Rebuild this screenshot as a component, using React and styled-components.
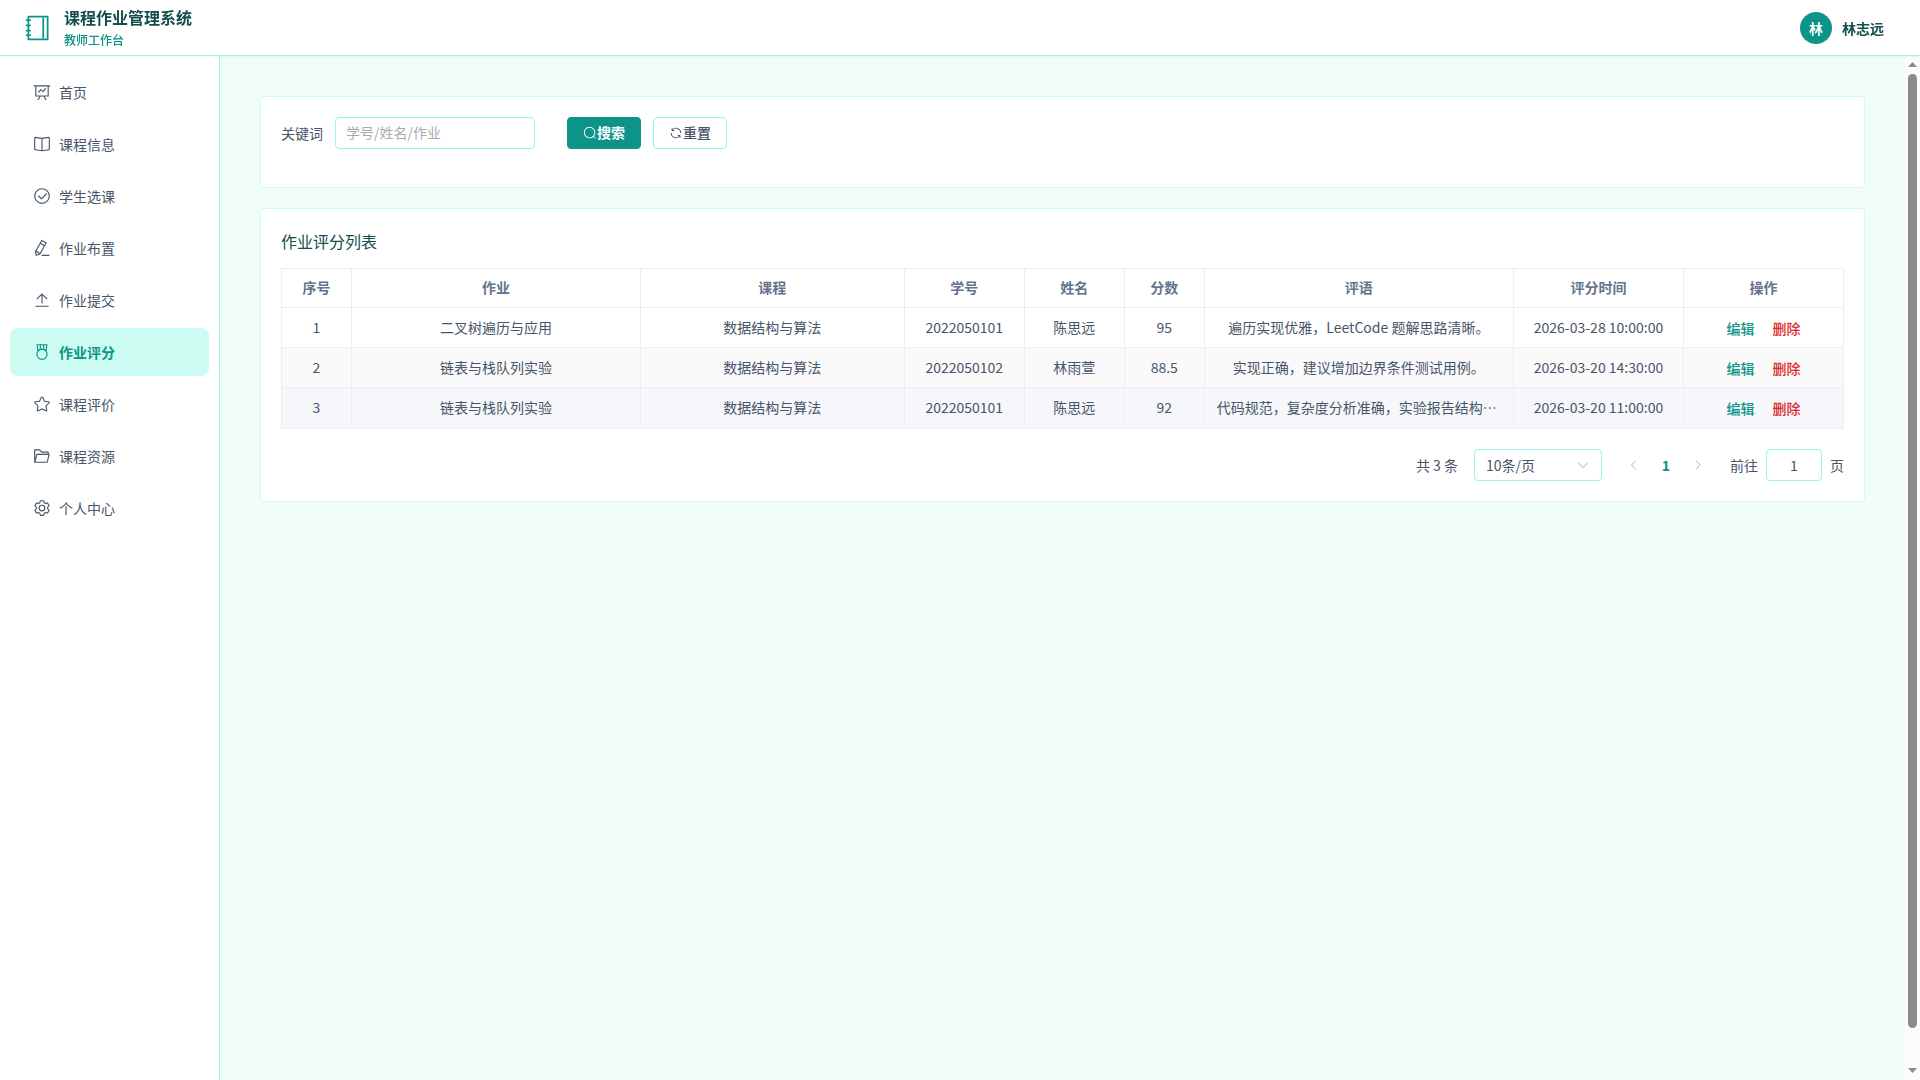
import { useState } from "react";
import styled, { createGlobalStyle, css } from "styled-components";

const ICONS = {
  notebook: [
    "M192 128v768h640V128zm-32-64h704a32 32 0 0 1 32 32v832a32 32 0 0 1-32 32H160a32 32 0 0 1-32-32V96a32 32 0 0 1 32-32",
    "M672 128h64v768h-64zM96 192h128q32 0 32 32t-32 32H96q-32 0-32-32t32-32m0 192h128q32 0 32 32t-32 32H96q-32 0-32-32t32-32m0 192h128q32 0 32 32t-32 32H96q-32 0-32-32t32-32m0 160h128q32 0 32 32t-32 32H96q-32 0-32-32t32-32",
  ],
  dataLine: [
    "M359.168 768H160a32 32 0 0 1-32-32V192H64a32 32 0 0 1 0-64h896a32 32 0 1 1 0 64h-64v544a32 32 0 0 1-32 32H665.216l110.848 192h-73.856L591.36 768H433.024L322.176 960H248.32zM832 192H192v512h640zM342.656 534.656a32 32 0 1 1-45.312-45.312L444.992 341.76l125.44 94.08L679.04 300.032a32 32 0 1 1 49.92 39.936L581.632 524.224 451.008 426.24 342.656 534.592z",
  ],
  reading: [
    "m512 863.36 384-54.848v-638.72L525.568 222.72a96 96 0 0 1-27.136 0L128 169.792v638.72zM137.024 106.432l370.432 52.928a32 32 0 0 0 9.088 0l370.432-52.928A64 64 0 0 1 960 169.792v638.72a64 64 0 0 1-54.976 63.36l-388.48 55.488a32 32 0 0 1-9.088 0l-388.48-55.488A64 64 0 0 1 64 808.512v-638.72a64 64 0 0 1 73.024-63.36",
    "M480 192h64v704h-64z",
  ],
  circleCheck: [
    "M512 896a384 384 0 1 0 0-768 384 384 0 0 0 0 768m0 64a448 448 0 1 1 0-896 448 448 0 0 1 0 896",
    "M745.344 361.344a32 32 0 0 1 45.312 45.312l-288 288a32 32 0 0 1-45.312 0l-160-160a32 32 0 1 1 45.312-45.312L480 626.752z",
  ],
  editPen: [
    "m199.04 672.64 193.984 112 224-387.968-193.92-112-224 388.032zm-23.872 60.16 32.896 148.288 144.896-45.696zM455.04 229.248l193.92 112 56.704-98.112-193.984-112zM104.32 708.8l384-665.024 304.768 175.936L409.152 884.8h.064l-248.448 78.336zm384 254.272v-64h448v64z",
  ],
  upload: [
    "M160 832h704a32 32 0 1 1 0 64H160a32 32 0 1 1 0-64m384-578.304V704h-64V247.296L237.248 490.048 192 444.8 508.8 128l316.8 316.8-45.312 45.248z",
  ],
  medal: [
    "M512 896a256 256 0 1 0 0-512 256 256 0 0 0 0 512m0 64a320 320 0 1 1 0-640 320 320 0 0 1 0 640",
    "M576 128H448v200a286.7 286.7 0 0 1 64-8c19.52 0 40.832 2.688 64 8zm64 0v219.648c24.448 9.088 50.56 20.416 78.4 33.92L757.44 128zm-256 0H266.624l39.04 253.568c27.84-13.504 53.888-24.832 78.336-33.92zM229.312 64h565.376a32 32 0 0 1 31.616 36.864L768 480c-113.792-64-199.104-96-256-96s-142.208 32-256 96l-58.304-379.136A32 32 0 0 1 229.312 64",
  ],
  star: [
    "m512 747.84 228.16 119.936a6.4 6.4 0 0 0 9.28-6.72l-43.52-254.08 184.512-179.904a6.4 6.4 0 0 0-3.52-10.88l-255.104-37.12L517.76 147.904a6.4 6.4 0 0 0-11.52 0L392.192 379.072l-255.104 37.12a6.4 6.4 0 0 0-3.52 10.88L318.08 606.976l-43.584 254.08a6.4 6.4 0 0 0 9.28 6.72zM313.6 924.48a70.4 70.4 0 0 1-102.144-74.24l37.888-220.928L88.96 472.96A70.4 70.4 0 0 1 128 352.896l221.76-32.256 99.2-200.96a70.4 70.4 0 0 1 126.208 0l99.2 200.96 221.824 32.256a70.4 70.4 0 0 1 39.04 120.064L774.72 629.376l37.888 220.928a70.4 70.4 0 0 1-102.144 74.24L512 820.096l-198.4 104.32z",
  ],
  folderOpened: [
    "M878.08 448H241.92l-96 384h636.16zM832 384v-64H485.76L357.504 192H128v448l57.92-231.744A32 32 0 0 1 216.96 384zm-24.96 512H96a32 32 0 0 1-32-32V160a32 32 0 0 1 32-32h287.872l128.384 128H864a32 32 0 0 1 32 32v96h23.04a32 32 0 0 1 31.04 39.744l-112 448A32 32 0 0 1 807.04 896",
  ],
  setting: [
    "M600.704 64a32 32 0 0 1 30.464 22.208l35.2 109.376c14.784 7.232 28.928 15.36 42.432 24.512l112.384-24.192a32 32 0 0 1 34.432 15.36L944.32 364.8a32 32 0 0 1-4.032 37.504l-77.12 85.12a357.12 357.12 0 0 1 0 49.024l77.12 85.248a32 32 0 0 1 4.032 37.504l-88.704 153.6a32 32 0 0 1-34.432 15.296L708.8 803.904c-13.44 9.088-27.648 17.28-42.368 24.512l-35.264 109.376A32 32 0 0 1 600.704 960H423.296a32 32 0 0 1-30.464-22.208L357.696 828.48a351.616 351.616 0 0 1-42.56-24.64l-112.32 24.256a32 32 0 0 1-34.432-15.36L79.68 659.2a32 32 0 0 1 4.032-37.504l77.12-85.248a357.12 357.12 0 0 1 0-48.896l-77.12-85.248A32 32 0 0 1 79.68 364.8l88.704-153.6a32 32 0 0 1 34.432-15.296l112.32 24.256c13.568-9.152 27.776-17.408 42.56-24.64l35.2-109.312A32 32 0 0 1 423.232 64H600.64zm-23.424 64H446.72l-36.352 113.088-24.512 11.968a294.113 294.113 0 0 0-34.816 20.096l-22.656 15.36-116.224-25.088-65.28 113.152 79.68 88.192-1.92 27.136a293.12 293.12 0 0 0 0 40.192l1.92 27.136-79.808 88.192 65.344 113.152 116.224-25.024 22.656 15.296a294.113 294.113 0 0 0 34.816 20.096l24.512 11.968L446.72 896h130.688l36.48-113.152 24.448-11.904a288.282 288.282 0 0 0 34.752-20.096l22.592-15.296 116.288 25.024 65.28-113.152-79.744-88.192 1.92-27.136a293.12 293.12 0 0 0 0-40.256l-1.92-27.136 79.808-88.128-65.344-113.152-116.288 24.96-22.592-15.232a287.616 287.616 0 0 0-34.752-20.096l-24.448-11.904L577.344 128zM512 320a192 192 0 1 1 0 384 192 192 0 0 1 0-384m0 64a128 128 0 1 0 0 256 128 128 0 0 0 0-256",
  ],
  search: [
    "m795.904 750.72 124.992 124.928a32 32 0 0 1-45.248 45.248L750.656 795.904a416 416 0 1 1 45.248-45.248zM480 832a352 352 0 1 0 0-704 352 352 0 0 0 0 704",
  ],
  refresh: [
    "M771.776 794.88A384 384 0 0 1 128 512h64a320 320 0 0 0 555.712 216.448H654.72a32 32 0 1 1 0-64h149.056a32 32 0 0 1 32 32v148.928a32 32 0 1 1-64 0v-50.56zM276.288 295.616h92.992a32 32 0 0 1 0 64H220.16a32 32 0 0 1-32-32V178.56a32 32 0 0 1 64 0v50.56A384 384 0 0 1 896.128 512h-64a320 320 0 0 0-555.776-216.384z",
  ],
  arrowDown: [
    "M831.872 340.864 512 652.672 192.128 340.864a30.592 30.592 0 0 0-42.752 0 29.12 29.12 0 0 0 0 41.6L489.664 714.24a32 32 0 0 0 44.672 0l340.288-331.712a29.12 29.12 0 0 0 0-41.728 30.592 30.592 0 0 0-42.752 0z",
  ],
  arrowLeft: [
    "M609.408 149.376 277.76 489.6a32 32 0 0 0 0 44.672l331.648 340.352a29.12 29.12 0 0 0 41.728 0 30.592 30.592 0 0 0 0-42.752L339.264 511.936l311.872-319.872a30.592 30.592 0 0 0 0-42.688 29.12 29.12 0 0 0-41.728 0z",
  ],
  arrowRight: [
    "M340.864 149.312a30.592 30.592 0 0 0 0 42.752L652.736 512 340.864 831.872a30.592 30.592 0 0 0 0 42.752 29.12 29.12 0 0 0 41.728 0L714.24 534.336a32 32 0 0 0 0-44.672L382.592 149.376a29.12 29.12 0 0 0-41.728 0z",
  ],
};

const MENU = [
  { icon: "dataLine", label: "首页" },
  { icon: "reading", label: "课程信息" },
  { icon: "circleCheck", label: "学生选课" },
  { icon: "editPen", label: "作业布置" },
  { icon: "upload", label: "作业提交" },
  { icon: "medal", label: "作业评分" },
  { icon: "star", label: "课程评价" },
  { icon: "folderOpened", label: "课程资源" },
  { icon: "setting", label: "个人中心" },
];

const COLUMNS = [
  { title: "序号", width: "70px" },
  { title: "作业", width: "18.5%" },
  { title: "课程", width: "auto" },
  { title: "学号", width: "120px" },
  { title: "姓名", width: "100px" },
  { title: "分数", width: "80px" },
  { title: "评语", width: "19.8%" },
  { title: "评分时间", width: "170px" },
  { title: "操作", width: "160px" },
];

const ROWS = [
  {
    homework: "二叉树遍历与应用",
    course: "数据结构与算法",
    studentNo: "2022050101",
    name: "陈思远",
    score: "95",
    comment: "遍历实现优雅，LeetCode 题解思路清晰。",
    time: "2026-03-28 10:00:00",
  },
  {
    homework: "链表与栈队列实验",
    course: "数据结构与算法",
    studentNo: "2022050102",
    name: "林雨萱",
    score: "88.5",
    comment: "实现正确，建议增加边界条件测试用例。",
    time: "2026-03-20 14:30:00",
  },
  {
    homework: "链表与栈队列实验",
    course: "数据结构与算法",
    studentNo: "2022050101",
    name: "陈思远",
    score: "92",
    comment: "代码规范，复杂度分析准确，实验报告结构完整。",
    time: "2026-03-20 11:00:00",
  },
];

function Icon({ name, size }) {
  return (
    <IconSvg viewBox="0 0 1024 1024" $size={size} aria-hidden="true">
      {ICONS[name].map((d) => (
        <path key={d} d={d} />
      ))}
    </IconSvg>
  );
}

function Header() {
  return (
    <HeaderBar>
      <Brand>
        <Icon name="notebook" size={28} />
        <div>
          <BrandTitle>课程作业管理系统</BrandTitle>
          <BrandRole>教师工作台</BrandRole>
        </div>
      </Brand>
      <UserButton type="button">
        <Avatar>林</Avatar>
        林志远
      </UserButton>
    </HeaderBar>
  );
}

function SideBar() {
  const [active, setActive] = useState("作业评分");
  return (
    <Side>
      {MENU.map(({ icon, label }) => (
        <MenuItem
          key={label}
          href="#"
          $active={label === active}
          onClick={() => setActive(label)}
        >
          <MenuIcon>
            <Icon name={icon} size={18} />
          </MenuIcon>
          {label}
        </MenuItem>
      ))}
    </Side>
  );
}

function SearchCard() {
  const [keyword, setKeyword] = useState("");
  return (
    <Card>
      <SearchForm onSubmit={(e) => e.preventDefault()}>
        <Label htmlFor="keyword">关键词</Label>
        <TextInput
          id="keyword"
          placeholder="学号/姓名/作业"
          value={keyword}
          onChange={(e) => setKeyword(e.target.value)}
        />
        <FormButtons>
          <Button type="submit" $primary>
            <Icon name="search" size={14} />
            <span>搜索</span>
          </Button>
          <Button type="button" onClick={() => setKeyword("")}>
            <Icon name="refresh" size={14} />
            <span>重置</span>
          </Button>
        </FormButtons>
      </SearchForm>
    </Card>
  );
}

function ScoreTable() {
  return (
    <Table>
      <colgroup>
        {COLUMNS.map(({ title, width }) => (
          <Col key={title} $width={width} />
        ))}
      </colgroup>
      <thead>
        <tr>
          {COLUMNS.map(({ title }) => (
            <th key={title}>{title}</th>
          ))}
        </tr>
      </thead>
      <tbody>
        {ROWS.map((row, i) => (
          <Row key={row.time} $striped={i === 1} $hovered={i === 2}>
            <td>{i + 1}</td>
            <td>{row.homework}</td>
            <td>{row.course}</td>
            <td>{row.studentNo}</td>
            <td>{row.name}</td>
            <td>{row.score}</td>
            <td>{row.comment}</td>
            <td>{row.time}</td>
            <td>
              <Actions>
                <LinkButton type="button">编辑</LinkButton>
                <LinkButton type="button" $danger>
                  删除
                </LinkButton>
              </Actions>
            </td>
          </Row>
        ))}
      </tbody>
    </Table>
  );
}

function Pagination() {
  const [page, setPage] = useState("1");
  return (
    <Pager>
      <span>共 {ROWS.length} 条</span>
      <SelectBox>
        <select aria-label="每页条数" defaultValue="10">
          <option value="10">10条/页</option>
          <option value="20">20条/页</option>
          <option value="50">50条/页</option>
        </select>
        <Icon name="arrowDown" size={14} />
      </SelectBox>
      <Pages>
        <PageButton type="button" disabled aria-label="上一页">
          <Icon name="arrowLeft" size={12} />
        </PageButton>
        <PageButton type="button">1</PageButton>
        <PageButton type="button" disabled aria-label="下一页">
          <Icon name="arrowRight" size={12} />
        </PageButton>
      </Pages>
      <Jumper>
        前往
        <PageInput value={page} onChange={(e) => setPage(e.target.value)} />
        页
      </Jumper>
    </Pager>
  );
}

function ScrollBar() {
  return (
    <ScrollTrack aria-hidden="true">
      <ScrollArrow viewBox="0 0 9 5">
        <path d="M4.5 0 9 5H0z" />
      </ScrollArrow>
      <ScrollThumb />
      <ScrollArrow viewBox="0 0 9 5">
        <path d="M0 0h9L4.5 5z" />
      </ScrollArrow>
    </ScrollTrack>
  );
}

export default function App() {
  return (
    <>
      <GlobalStyle />
      <Layout>
        <Header />
        <Body>
          <SideBar />
          <Main>
            <Content>
              <SearchCard />
              <Card>
                <CardTitle>作业评分列表</CardTitle>
                <ScoreTable />
                <Pagination />
              </Card>
            </Content>
          </Main>
          <ScrollBar />
        </Body>
      </Layout>
    </>
  );
}

const GlobalStyle = createGlobalStyle`
  * {
    box-sizing: border-box;
  }
  body {
    margin: 0;
    color: #475569;
    font-family: "Noto Sans CJK SC", sans-serif;
    font-size: 14px;
  }
  button, input, select {
    font: inherit;
    color: inherit;
  }
  button {
    cursor: pointer;
  }
`;

const IconSvg = styled.svg`
  flex: none;
  width: ${({ $size }) => $size}px;
  height: ${({ $size }) => $size}px;
  fill: currentColor;
`;

const Layout = styled.div`
  display: grid;
  grid-template-rows: 56px 1fr;
  height: 100vh;
`;

const HeaderBar = styled.header`
  display: flex;
  align-items: center;
  justify-content: space-between;
  padding: 0 24px;
  background: #fff;
  border-bottom: 1px solid #99f6e4;
  box-shadow: 0 1px 4px rgba(0, 0, 0, 0.06);
  position: relative;
  z-index: 1;
`;

const Brand = styled.div`
  display: flex;
  align-items: center;
  gap: 12px;
  color: #0d9488;
`;

const BrandTitle = styled.div`
  font-size: 16px;
  font-weight: 700;
  line-height: 24px;
  color: #134e4a;
`;

const BrandRole = styled.div`
  font-size: 12px;
  font-weight: 500;
  line-height: 20px;
  padding-top: 1px;
`;

const UserButton = styled.button`
  display: flex;
  align-items: center;
  gap: 10px;
  padding: 0 12px;
  border: none;
  background: none;
  font-weight: 600;
  color: #134e4a;
`;

const Avatar = styled.span`
  display: grid;
  place-items: center;
  width: 32px;
  height: 32px;
  border-radius: 50%;
  background: #0d9488;
  color: #fff;
`;

const Body = styled.div`
  display: grid;
  grid-template-columns: 220px 1fr 15px;
  min-height: 0;
`;

const Side = styled.nav`
  display: flex;
  flex-direction: column;
  gap: 4px;
  padding: 12px 10px;
  background: #fff;
  border-right: 1px solid #99f6e4;
`;

const MenuItem = styled.a`
  display: flex;
  align-items: center;
  gap: 5px;
  height: 48px;
  padding: 0 20px;
  border-radius: 8px;
  color: #475569;
  text-decoration: none;
  ${({ $active }) =>
    $active &&
    css`
      background: #ccfbf1;
      color: #0d9488;
      font-weight: 600;
    `}
`;

const MenuIcon = styled.span`
  display: grid;
  place-items: center;
  width: 24px;
`;

const Main = styled.main`
  overflow-y: auto;
  scrollbar-width: none;
  background: #f0fdfa;
`;

const Content = styled.div`
  display: flex;
  flex-direction: column;
  gap: 20px;
  min-height: calc(100vh - 20px);
  padding: 40px;
`;

const ScrollTrack = styled.div`
  display: flex;
  flex-direction: column;
  align-items: center;
  justify-content: space-between;
  padding: 6px 0 7px;
  background: #fcfcfc;
`;

const ScrollArrow = styled.svg`
  width: 9px;
  height: 5px;
  fill: #8b8b8b;
`;

const ScrollThumb = styled.div`
  flex: 1;
  width: 9px;
  margin: 7px 0 40px;
  border-radius: 5px;
  background: #8b8b8b;
`;

const Card = styled.section`
  padding: 20px;
  background: #fff;
  border: 1px solid #ccfbf1;
  border-radius: 4px;
`;

const CardTitle = styled.h2`
  margin: 0 0 14px;
  font-size: 16px;
  font-weight: 400;
  line-height: 25px;
  color: #134e4a;
`;

const SearchForm = styled.form`
  display: flex;
  align-items: center;
  margin-bottom: 18px;
`;

const Label = styled.label`
  padding-right: 12px;
`;

const TextInput = styled.input`
  width: 200px;
  height: 32px;
  padding: 0 10px 2px;
  border: 1px solid #99f6e4;
  border-radius: 4px;
  background: #fff;
  outline: none;
  &::placeholder {
    color: #a8abb2;
  }
`;

const FormButtons = styled.div`
  display: flex;
  gap: 12px;
  margin-left: 32px;
`;

const Button = styled.button`
  display: flex;
  align-items: center;
  height: 32px;
  padding: 0 15px;
  border: 1px solid ${({ $primary }) => ($primary ? "#0d9488" : "#99f6e4")};
  border-radius: 4px;
  background: ${({ $primary }) => ($primary ? "#0d9488" : "#fff")};
  color: ${({ $primary }) => ($primary ? "#fff" : "#475569")};
  font-weight: ${({ $primary }) => ($primary ? 600 : 500)};
  span {
    padding-bottom: 2px;
  }
`;

const Table = styled.table`
  width: 100%;
  table-layout: fixed;
  border-collapse: collapse;
  th,
  td {
    height: 40px;
    padding: 0 12px 2px;
    border: 1px solid #ebeef5;
    text-align: center;
    overflow: hidden;
    text-overflow: ellipsis;
    white-space: nowrap;
  }
  th {
    height: 39px;
    color: #64748b;
    font-weight: 600;
  }
  tr:last-child td {
    height: 41px;
  }
`;

const Col = styled.col`
  width: ${({ $width }) => $width};
`;

const Row = styled.tr`
  background: ${({ $striped, $hovered }) =>
    $hovered ? "#f5f7fa" : $striped ? "#fafafa" : "#fff"};
`;

const Actions = styled.div`
  display: flex;
  justify-content: center;
  gap: 18px;
`;

const LinkButton = styled.button`
  padding: 2px 0 0;
  border: none;
  background: none;
  font-weight: 500;
  color: ${({ $danger }) => ($danger ? "#dc2626" : "#0d9488")};
`;

const Pager = styled.div`
  display: flex;
  align-items: center;
  justify-content: flex-end;
  gap: 16px;
  margin-top: 20px;
`;

const SelectBox = styled.div`
  position: relative;
  select {
    display: block;
    appearance: none;
    width: 128px;
    height: 32px;
    padding: 0 11px;
    border: 1px solid #99f6e4;
    border-radius: 4px;
    background: #fff;
  }
  svg {
    position: absolute;
    top: 9px;
    right: 12px;
    fill: #a8abb2;
    pointer-events: none;
  }
`;

const Pages = styled.div`
  display: flex;
`;

const PageButton = styled.button`
  display: grid;
  place-items: center;
  width: 32px;
  height: 32px;
  padding: 0;
  border: none;
  background: none;
  font-weight: 700;
  color: #0d9488;
  &:disabled {
    color: #a8abb2;
  }
`;

const Jumper = styled.label`
  display: flex;
  align-items: center;
  gap: 8px;
`;

const PageInput = styled.input`
  width: 56px;
  height: 32px;
  padding: 0 11px;
  border: 1px solid #99f6e4;
  border-radius: 4px;
  text-align: center;
`;
